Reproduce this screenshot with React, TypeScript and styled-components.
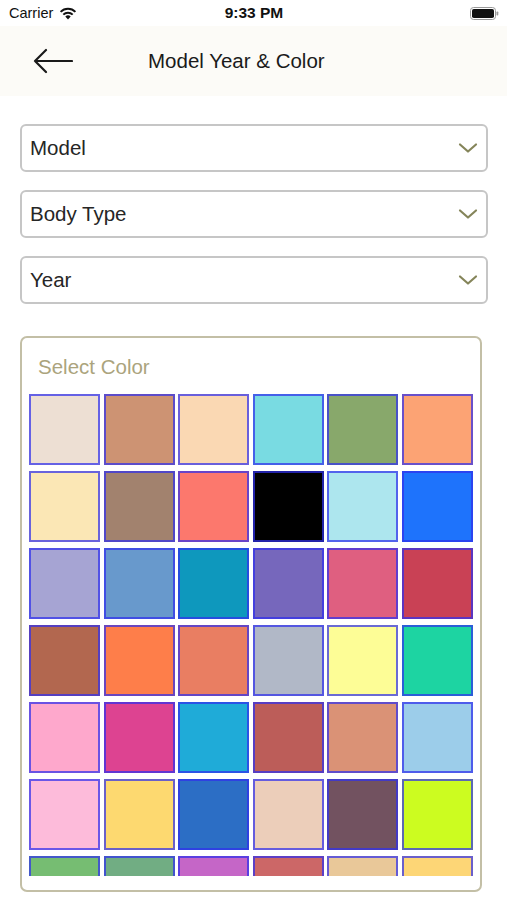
import React from "react";
import styled, { createGlobalStyle } from "styled-components";

const Global = createGlobalStyle`
  html, body { margin: 0; padding: 0; background: #ffffff; }
  body { font-family: "Liberation Sans", Arial, sans-serif; color: #1a1a1a; }
  * { box-sizing: border-box; }
`;

const Screen = styled.div`
  width: 507px;
  height: 900px;
  overflow: hidden;
  display: flex;
  flex-direction: column;
  background: #fff;
`;

const StatusBar = styled.div`
  height: 26px;
  display: grid;
  grid-template-columns: 1fr auto 1fr;
  align-items: center;
  padding: 0 8px 0 9px;
  font-size: 14.5px;
  color: #111;
`;

const StatusLeft = styled.div`
  display: flex;
  align-items: center;
  gap: 6px;
`;

const Time = styled.div`
  font-weight: 700;
  font-size: 15.5px;
`;

const StatusRight = styled.div`
  display: flex;
  justify-content: flex-end;
`;

const Header = styled.div`
  height: 70px;
  background: #fcfbf7;
  display: flex;
  align-items: center;
  padding-left: 33px;
`;

const BackButton = styled.div`
  width: 40px;
  height: 26px;
  display: flex;
  align-items: center;
`;

const Title = styled.div`
  margin-left: 75px;
  font-size: 20.5px;
  color: #1a1a1a;
`;

const Content = styled.div`
  padding: 28px 19px 0 20px;
  display: flex;
  flex-direction: column;
`;

const Select = styled.div`
  height: 48px;
  border: 2px solid #c6c6c6;
  border-radius: 6px;
  display: flex;
  align-items: center;
  justify-content: space-between;
  padding: 0 8px 0 8px;
  margin-bottom: 18px;
  font-size: 20.5px;
  color: #262626;
`;

const Card = styled.div`
  margin-top: 14px;
  width: 462px;
  height: 556px;
  border: 2px solid #c3bfa6;
  border-radius: 7px;
  padding: 0 7px 0 7px;
  display: flex;
  flex-direction: column;
`;

const CardTitle = styled.div`
  height: 56px;
  display: flex;
  align-items: center;
  padding-left: 9px;
  padding-top: 1px;
  font-size: 20.5px;
  color: #aba47d;
`;

const GridClip = styled.div`
  height: 482px;
  overflow: hidden;
`;

const Grid = styled.div`
  display: grid;
  grid-template-columns: repeat(6, 1fr);
  grid-auto-rows: 71px;
  column-gap: 3.6px;
  row-gap: 6px;
`;

const Swatch = styled.div<{ $c: string }>`
  background: ${(p) => p.$c};
  border: 2px solid rgba(48, 48, 235, 0.72);
`;

const colors = [
  "#eddfd3", "#cd9373", "#fad8b3", "#79dbe2", "#88a86b", "#fca374",
  "#fbe7b5", "#a2826e", "#fc786d", "#000000", "#ade6ee", "#1e73fc",
  "#a6a4d3", "#6899cc", "#0e98bd", "#7667bc", "#df5f80", "#c94155",
  "#b2674f", "#fe7e4a", "#e97e62", "#b1b8c7", "#fdfd96", "#1dd4a2",
  "#fea8cc", "#dd4391", "#1fabd8", "#bc5d59", "#da9276", "#9ccdea",
  "#fdbbda", "#fdd970", "#2c6ec5", "#ecceba", "#725260", "#ccfc20",
  "#76bd72", "#71ad83", "#c566c7", "#cc6767", "#e9c899", "#fdd676",
];

const Chevron = () => (
  <svg width="20" height="12" viewBox="0 0 20 12">
    <path d="M2 2.5 L10 9.5 L18 2.5" fill="none" stroke="#85855a" strokeWidth="2.2" strokeLinecap="round" strokeLinejoin="round" />
  </svg>
);

const Wifi = () => (
  <svg width="18" height="13" viewBox="0 0 18 13">
    <path d="M9 12.5 L6.3 9.6 A3.9 3.9 0 0 1 11.7 9.6 Z" fill="#111" />
    <path d="M4.3 7.6 A6.7 6.7 0 0 1 13.7 7.6" fill="none" stroke="#111" strokeWidth="2" />
    <path d="M1.6 4.9 A10.5 10.5 0 0 1 16.4 4.9" fill="none" stroke="#111" strokeWidth="2" />
  </svg>
);

const Battery = () => (
  <svg width="29" height="13" viewBox="0 0 29 13">
    <rect x="0.5" y="0.5" width="25" height="12" rx="3" fill="none" stroke="#999" strokeWidth="1" />
    <rect x="2" y="2" width="22" height="9" rx="1.8" fill="#111" />
    <rect x="26.5" y="4.5" width="1.8" height="4" rx="0.8" fill="#999" />
  </svg>
);

const Arrow = () => (
  <svg width="40" height="26" viewBox="0 0 40 26">
    <path d="M39 13 H2 M13 2 L2 13 L13 24" fill="none" stroke="#1a1a1a" strokeWidth="2.2" strokeLinecap="round" strokeLinejoin="round" />
  </svg>
);

export default function App() {
  return (
    <>
      <Global />
      <Screen>
        <StatusBar>
          <StatusLeft>
            <span>Carrier</span>
            <Wifi />
          </StatusLeft>
          <Time>9:33 PM</Time>
          <StatusRight>
            <Battery />
          </StatusRight>
        </StatusBar>
        <Header>
          <BackButton>
            <Arrow />
          </BackButton>
          <Title>Model Year &amp; Color</Title>
        </Header>
        <Content>
          {["Model", "Body Type", "Year"].map((l) => (
            <Select key={l}>
              <span>{l}</span>
              <Chevron />
            </Select>
          ))}
          <Card>
            <CardTitle>Select Color</CardTitle>
            <GridClip>
              <Grid>
                {colors.map((c, i) => (
                  <Swatch key={i} $c={c} />
                ))}
              </Grid>
            </GridClip>
          </Card>
        </Content>
      </Screen>
    </>
  );
}
